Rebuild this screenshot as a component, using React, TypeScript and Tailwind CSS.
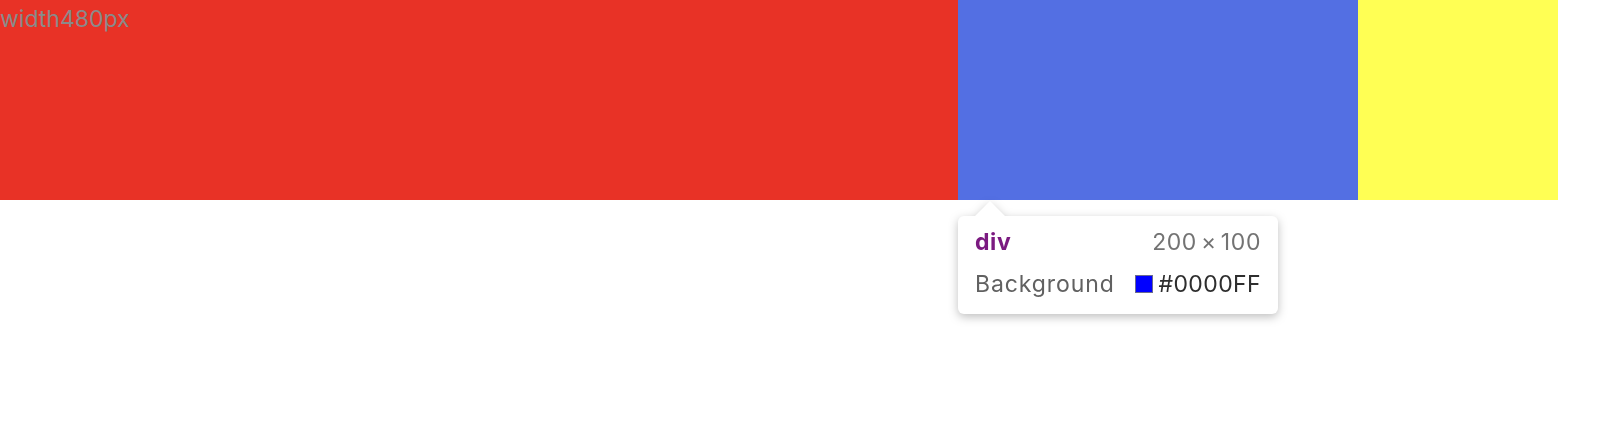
import React from "react";

export default function App() {
  return (
    <div className="relative w-[1602px] h-[422px] bg-white overflow-hidden" style={{ fontFamily: "Inter, 'Liberation Sans', sans-serif" }}>
      <div className="flex h-[200px]">
        <div className="w-[958px] h-full bg-[#e83226] text-[23px] leading-[28px] pt-[5px] text-[#8a8a8a]">width480px</div>
        <div className="w-[400px] h-full bg-[#536fe3]" />
        <div className="w-[200px] h-full bg-[#ffff54]" />
      </div>

      {/* tooltip with arrow */}
      <div className="absolute left-[958px] top-[201px] w-[320px] flex flex-col drop-shadow-[0_3px_5px_rgba(0,0,0,0.25)]">
        <div className="ml-[17px] w-0 h-0 border-l-[15px] border-r-[15px] border-b-[15px] border-l-transparent border-r-transparent border-b-white" />
        <div className="h-[98px] bg-white rounded-[6px] px-[17px] pt-[12px] pb-[16px] flex flex-col gap-[14px] text-[23px] leading-[28px]">
          <div className="flex justify-between items-center">
            <span className="font-bold text-[#7b1a80] tracking-[0.6px]">div</span>
            <span className="text-[#737373] tracking-[0.6px]">200<span className="mx-[4px]">×</span>100</span>
          </div>
          <div className="flex justify-between items-center">
            <span className="text-[#616161] tracking-[0.9px]">Background</span>
            <span className="flex items-center gap-[5px] text-[#2e2e2e] tracking-[0.4px]">
              <span className="w-[18px] h-[18px] bg-[#0000ff] border border-[#6b6b8f]" />
              #0000FF
            </span>
          </div>
        </div>
      </div>
    </div>
  );
}
